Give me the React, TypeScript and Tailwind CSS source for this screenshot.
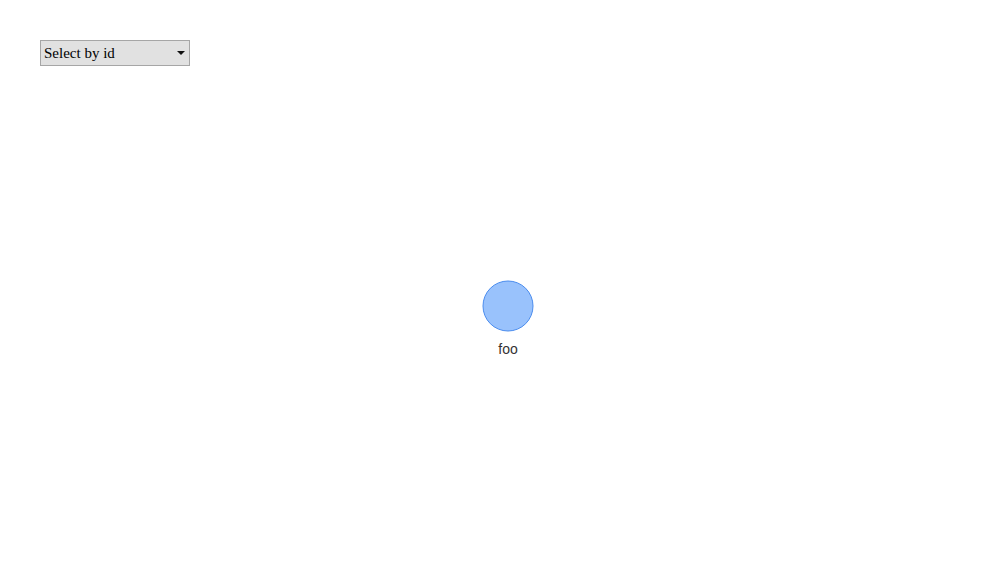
import React from "react";

export default function App() {
  return (
    <div className="relative w-[1000px] h-[580px] bg-white overflow-hidden">
      <div className="pt-10 pl-10">
        <div className="relative w-[150px] h-[26px] bg-[#e1e1e1] border border-[#a6a6a6] flex items-center pl-[3px] text-[15px] text-black" style={{ fontFamily: '"Liberation Serif", "Times New Roman", serif' }}>
          <span>Select by id</span>
          <svg className="absolute right-[4px] top-[10px]" width="8" height="5" viewBox="0 0 8 5">
            <polygon points="0,0 8,0 4,4" fill="#111" />
          </svg>
        </div>
      </div>
      <div className="absolute left-[458px] top-[280px] w-[100px] flex flex-col items-center">
        <svg width="52" height="52" viewBox="0 0 52 52">
          <circle cx="26" cy="26" r="25" fill="#99c2fc" stroke="#4a8cee" strokeWidth="1" />
        </svg>
        <span className="mt-[9px] text-[14px] leading-[16px] text-[#333]" style={{ fontFamily: '"Liberation Sans", Arial, sans-serif' }}>foo</span>
      </div>
    </div>
  );
}
